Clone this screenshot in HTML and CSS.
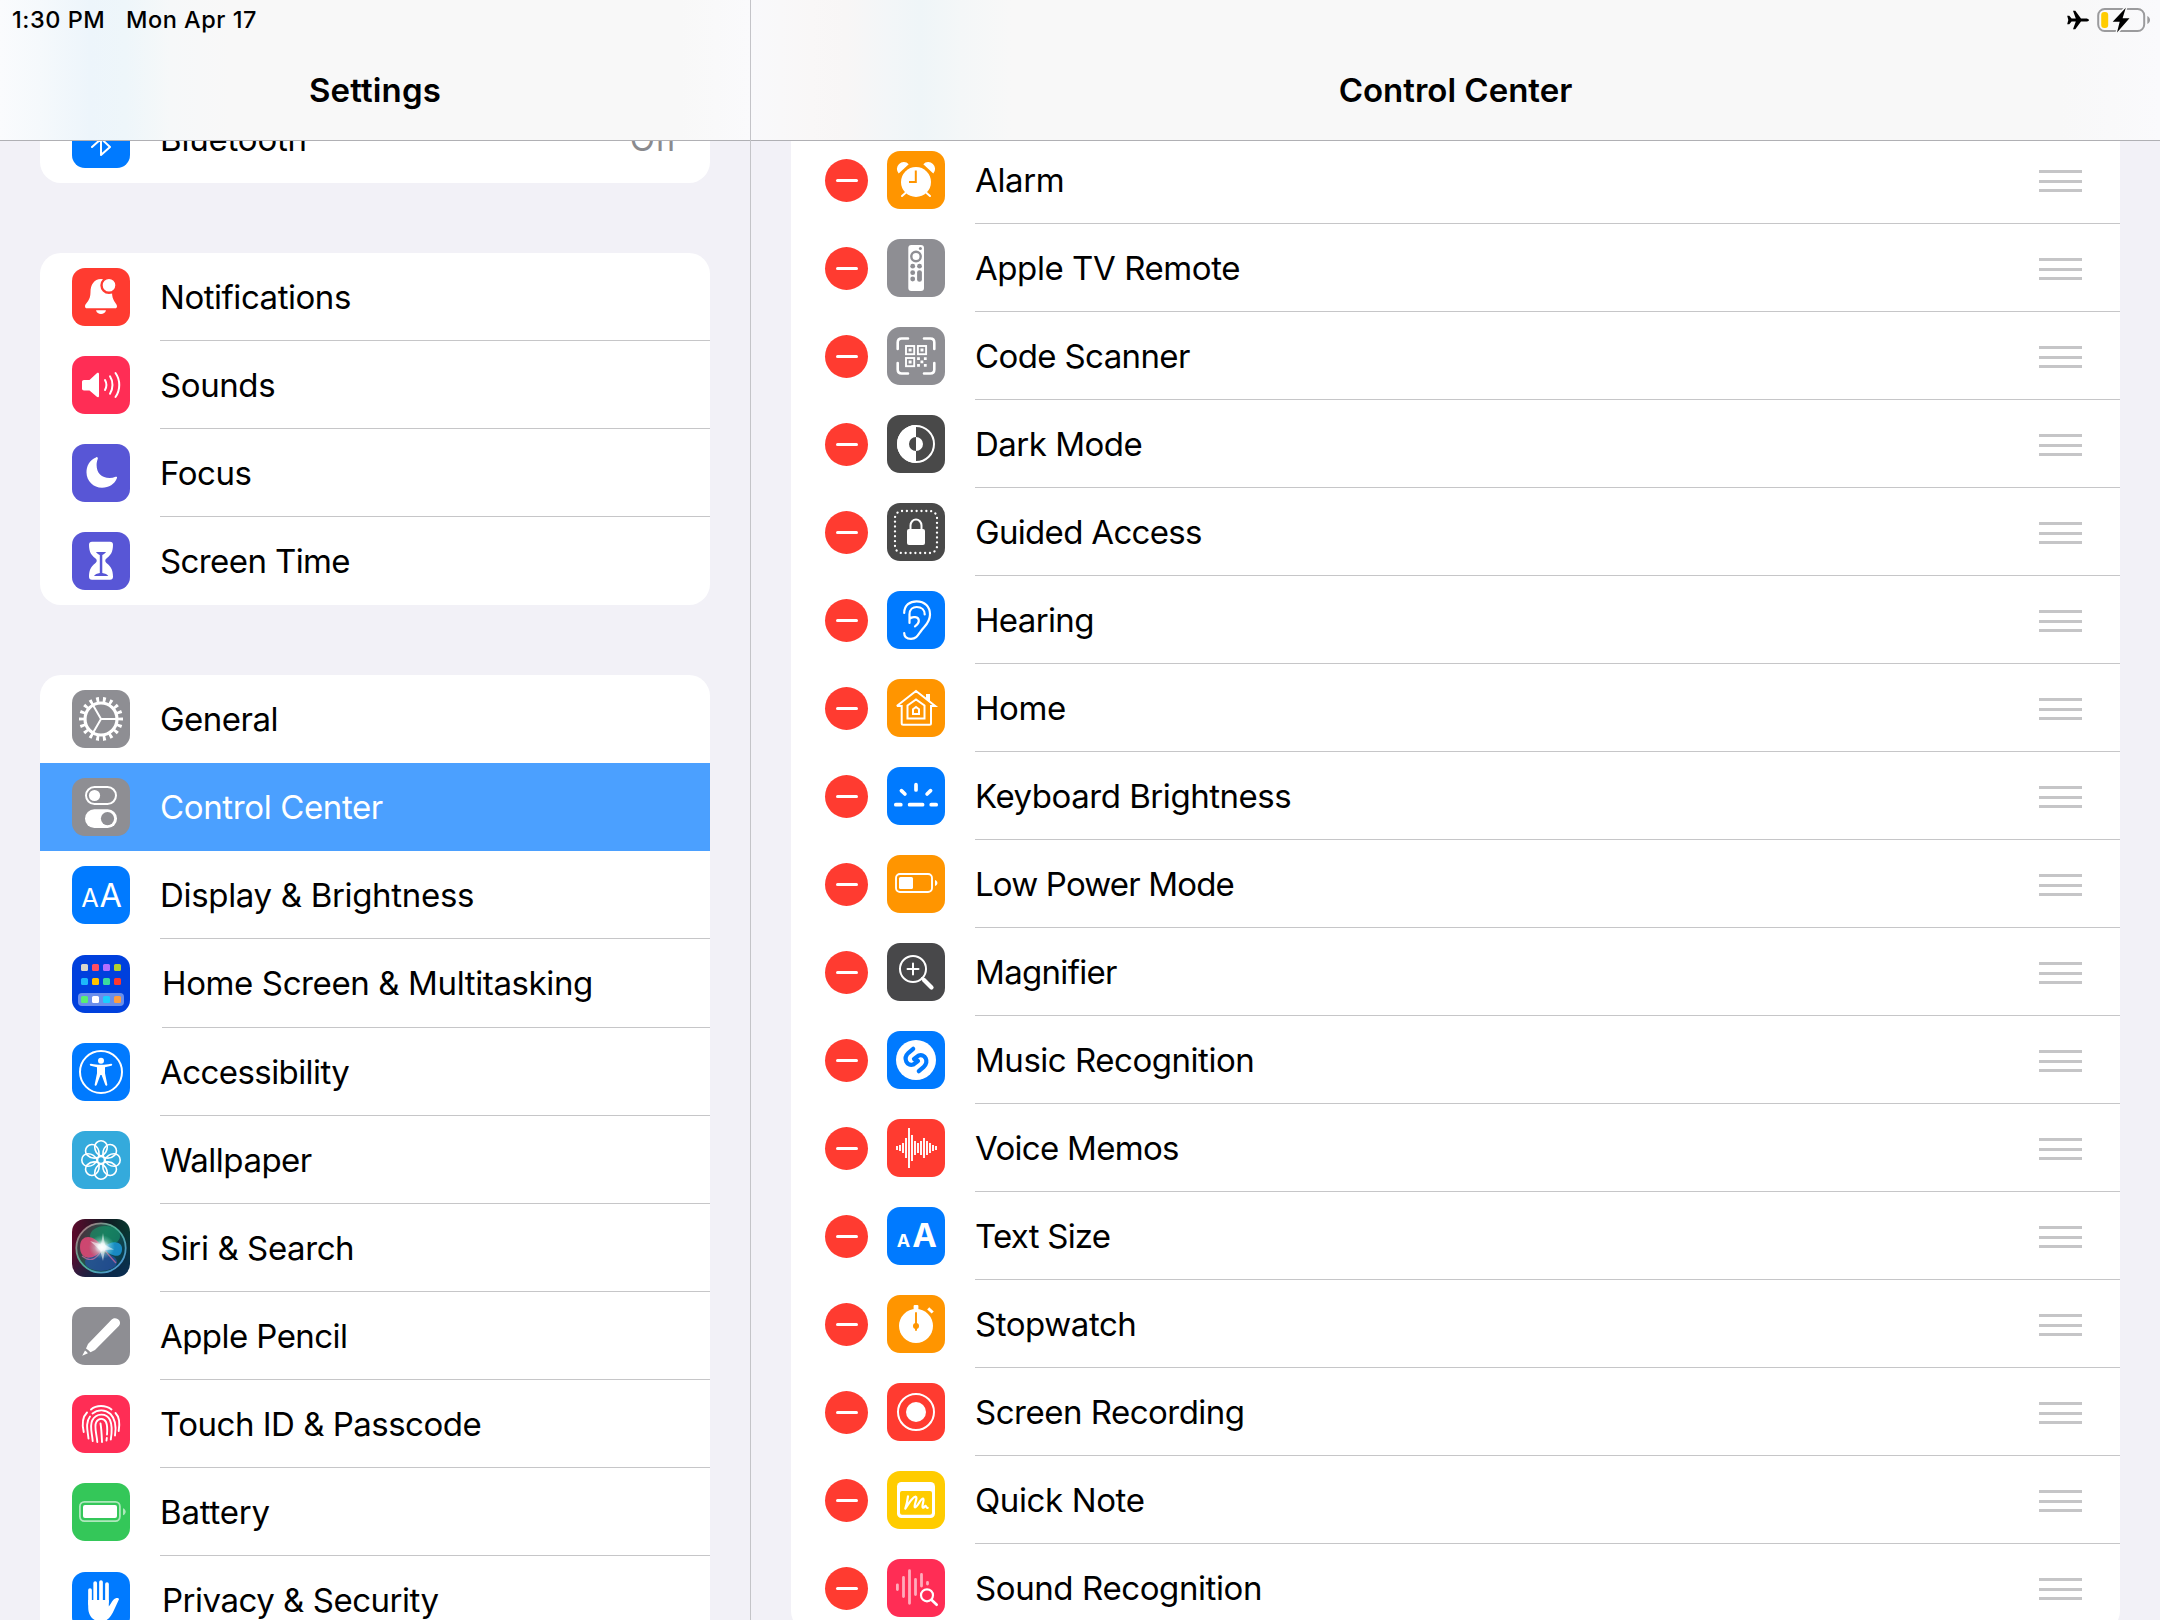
FILE: index.html
```html
<!DOCTYPE html>
<html lang="en">
<head>
<meta charset="utf-8">
<title>Settings</title>
<link rel="stylesheet" href="styles.css">
</head>
<body>
<div class="screen">
  <aside class="pane sidebar">
    <header class="bar bar-side">
      <div class="status"><span class="time">1:30 PM</span><span class="date">Mon Apr 17</span></div>
      <h1 class="title">Settings</h1>
    </header>
    <nav class="scroll side-scroll">
      <ul class="group">
        <li class="row"><span class="icon blue"><svg viewBox="0 0 58 58"><path class="s2" d="M20 20 38 37 29 45V13l9 8-18 16"/></svg></span><span class="label l-bt">Bluetooth</span><span class="value">Off</span></li>
      </ul>
      <ul class="group">
        <li class="row"><span class="icon red"><svg viewBox="0 0 58 58"><path class="f" d="M29 11C22 11 18.5 17 18.5 24 18.5 33 14 34 13 38c0 1.500.5 2.300 2 2.300H43c1.500 0 2-.8 2-2.300C44 34 40 33 40 24 39.500 17 36 11 29 11ZM24 42.300H34c-.6 2.500-2.600 3.700-5 3.700s-4.400-1.200-5-3.700Z"/><circle cx="37" cy="17.300" r="7.500" class="f s-red"/></svg></span><span class="label l-notif">Notifications</span></li>
        <li class="row"><span class="icon pink"><svg viewBox="0 0 58 58"><path class="f" d="M12 24h5.500l7.300-6.700c1-.9 2.200-.5 2.200.8v21.800c0 1.300-1.200 1.700-2.200.8L17.500 34.500H12c-1.300 0-2-.7-2-2v-6.500c0-1.300.7-2 2-2Z"/><path class="s2" d="M33 24c1.700 3 1.700 7 0 10M38 20.300c3.300 5 3.300 12.400 0 17.400M43.500 17c5 7 5 17 0 24"/></svg></span><span class="label l-sounds">Sounds</span></li>
        <li class="row"><span class="icon indigo"><svg viewBox="0 0 58 58"><path class="f" d="M24.500 13.200C17 16 14.500 22.500 14.500 28.500 14.500 37 21.500 43.700 30 43.700c7 0 12.500-3.500 15-9.700.3-1-.4-1.600-1.400-1.200-2 .8-4 1.200-6 1.200-8 0-13-5-13-13 0-2.300.5-4.400 1.200-6.200.4-1-.6-2-1.800-1.600Z"/></svg></span><span class="label l-focus">Focus</span></li>
        <li class="row"><span class="icon indigo"><svg viewBox="0 0 58 58"><path class="f" d="M20 9.700H38c2 0 3 1 3 3 0 7.500-2.500 10.500-6 13.300-1.200 1-1.700 1.700-1.700 2.700s.5 1.700 1.700 2.700c3.500 2.800 6 5.800 6 13.300 0 2-1 3-3 3H20c-2 0-3-1-3-3 0-7.500 2.500-10.500 6-13.300 1.200-1 1.700-1.700 1.700-2.700s-.5-1.700-1.700-2.700c-3.500-2.800-6-5.800-6-13.300 0-2 1-3 3-3Z"/><path class="f-indigo" d="M24 20H34c-.8 1.500-2.500 2.300-3.700 3V41c2.700.5 5.200 1.400 6 3H22c.8-1.600 3.200-2.500 5.800-3V23C26.500 22.300 24.800 21.500 24 20Z"/></svg></span><span class="label l-screen">Screen Time</span></li>
      </ul>
      <ul class="group">
        <li class="row"><span class="icon gray"><svg viewBox="0 0 58 58"><circle class="n" cx="29" cy="29" r="19.300" stroke-width="5.400" pathLength="180" stroke-dasharray="4.200 5.800" stroke-dashoffset="2.100"/><circle class="n" cx="29" cy="29" r="16" stroke-width="3.200"/><path class="s2" d="M29 29H44M29 29 21.500 16M29 29 21.500 42"/></svg></span><span class="label l-general">General</span></li>
        <li class="row selected"><span class="icon gray"><svg viewBox="0 0 58 58"><rect class="s2" x="14" y="9" width="30" height="17" rx="8.500"/><circle class="f" cx="22.500" cy="17.500" r="5.600"/><rect class="f" x="13" y="31.300" width="32" height="18.700" rx="9.300"/><circle class="f-gray" cx="35.500" cy="40.600" r="6.600"/></svg></span><span class="label l-cc">Control Center</span></li>
        <li class="row"><span class="icon blue"><svg viewBox="0 0 58 58"><text class="f glyph" x="9.200" y="41" font-size="25.500">A</text><text class="f glyph" x="27.400" y="41" font-size="32.500">A</text></svg></span><span class="label l-display">Display &amp; Brightness</span></li>
        <li class="row tall"><span class="icon navy"><svg viewBox="0 0 58 58"><rect x="6" y="38" width="46" height="13" rx="4" fill="#6a8fec"/><g><rect x="9" y="9" width="7" height="7" rx="1.500" fill="#d9d6cb"/><rect x="20" y="9" width="7" height="7" rx="1.500" fill="#ff4e63"/><rect x="31" y="9" width="7" height="7" rx="1.500" fill="#b36eff"/><rect x="42" y="9" width="7" height="7" rx="1.500" fill="#b0d12f"/><rect x="9" y="23" width="7" height="7" rx="1.500" fill="#1db8fa"/><rect x="20" y="23" width="7" height="7" rx="1.500" fill="#ffc300"/><rect x="31" y="23" width="7" height="7" rx="1.500" fill="#3bdb9f"/><rect x="42" y="23" width="7" height="7" rx="1.500" fill="#ff382f"/><rect x="9" y="41" width="7" height="7" rx="1.500" fill="#58f070"/><rect x="20" y="41" width="7" height="7" rx="1.500" fill="#fff"/><rect x="31" y="41" width="7" height="7" rx="1.500" fill="#1acfff"/><rect x="42" y="41" width="7" height="7" rx="1.500" fill="#ff9d40"/></g></svg></span><span class="label l-homescreen">Home Screen &amp; Multitasking</span></li>
        <li class="row"><span class="icon blue"><svg viewBox="0 0 58 58"><circle class="s2" cx="29" cy="29" r="21"/><circle class="f" cx="29" cy="17.800" r="3"/><path class="f" d="M19 20.700c3.500.7 6.500 1.100 10 1.100s6.500-.4 10-1.100c1.400-.2 1.700 1.600.4 2L33 24.300v6l2.300 11.200c.2 1.400-1.500 1.800-2 .5L29.600 32h-1.200L24.700 42c-.5 1.300-2.200.9-2-.5L25 30.300v-6l-6.400-1.600c-1.300-.4-1-2.200.4-2Z"/></svg></span><span class="label l-access">Accessibility</span></li>
        <li class="row"><span class="icon sky"><svg viewBox="0 0 58 58"><defs><path id="petal" d="M0-3.800C-3.500-5.500-6.300-8-6.300-13.200A6.300 6 0 0 1 6.300-13.200C6.300-8 3.500-5.500 0-3.800Z"/></defs><g class="n" stroke-width="1.600" transform="translate(29 29)"><use href="#petal"/><use href="#petal" transform="rotate(45)"/><use href="#petal" transform="rotate(90)"/><use href="#petal" transform="rotate(135)"/><use href="#petal" transform="rotate(180)"/><use href="#petal" transform="rotate(225)"/><use href="#petal" transform="rotate(270)"/><use href="#petal" transform="rotate(315)"/><circle r="3.500"/></g></svg></span><span class="label l-wall">Wallpaper</span></li>
        <li class="row"><span class="icon siri"><svg viewBox="0 0 58 58"><defs><radialGradient id="glow"><stop offset="0" stop-color="#fff"/><stop offset=".28" stop-color="#f2fdff" stop-opacity=".9"/><stop offset=".6" stop-color="#c8f0ee" stop-opacity=".35"/><stop offset="1" stop-color="#8fd" stop-opacity="0"/></radialGradient><linearGradient id="ring" x1="0" y1="0" x2="1" y2="1"><stop offset="0" stop-color="#c0687c"/><stop offset=".45" stop-color="#4fb095"/><stop offset="1" stop-color="#4a8fe0"/></linearGradient><linearGradient id="orb" x1="0" y1="0" x2="1" y2=".5"><stop offset="0" stop-color="#5b1f35"/><stop offset=".55" stop-color="#1b5d50"/><stop offset="1" stop-color="#0a3c4c"/></linearGradient></defs><circle cx="29" cy="29" r="24.700" fill="url(#orb)" stroke="url(#ring)" stroke-width="1.800"/><ellipse cx="33" cy="17" rx="15" ry="10" fill="#16a070" opacity=".55"/><ellipse cx="29" cy="43" rx="16" ry="9" fill="#2a50a8" opacity=".7"/><path d="M31 30C24 15 8 14 8 28S22 42 31 30Z" fill="#e84878" opacity=".85"/><path d="M30 29C40 20 51 22 50 31S40 38 30 29Z" fill="#1b9be0" opacity=".8"/><path d="M10 37C20 45 26 38 31 29 36 35 40 40 44 44" fill="none" stroke="#c06aa0" stroke-width="1.200" opacity=".8"/><ellipse cx="30" cy="28" rx="13" ry="12" fill="url(#glow)"/><path d="M18 22 29 25.500 31 14 33 26 42 30.500 33 31 31 42 28 31Z" fill="#fff" opacity=".55"/></svg></span><span class="label l-siri">Siri &amp; Search</span></li>
        <li class="row"><span class="icon gray"><svg viewBox="0 0 58 58"><path class="f" d="M14 41.500 16 37 39.700 12.600C44 8.500 51 14.500 46.800 19L23 43l-4.500 2.200Q16.500 43.200 14 41.500ZM13 43.500q1.800 1 2.900 2.800L10.200 48.800Z"/></svg></span><span class="label l-pencil">Apple Pencil</span></li>
        <li class="row"><span class="icon pink"><svg viewBox="0 0 58 58"><path class="n cap" stroke-width="1.900" d="M19 14.500Q23 11 29 11t10.500 3.500M11.700 37C10 29.500 10.500 22 15 17.500M43.500 18C47 21.500 48 28 46.700 36M16.500 43.500C15.500 35 13.300 27.500 18 21.500M20.500 18.500C26 14 33.500 14.500 38.500 19 43 23.500 44.500 31 43 40.500M20.700 46C20 38 17.500 31 20.200 25.500 24 17.700 34.500 17.700 38 25 40 29.500 40 37 38.800 44.500M25.300 47C24.700 39 21.800 31.500 24.300 27 26.500 22.800 32 22.800 34 27 35.300 30 35.400 35 35 39.500M34.800 43l-.3 2.500M30 47C29.700 40 29.500 34 28.500 28.500"/></svg></span><span class="label l-touch">Touch ID &amp; Passcode</span></li>
        <li class="row"><span class="icon green"><svg viewBox="0 0 58 58"><g opacity=".6"><rect class="n" stroke-width="1.800" x="7.900" y="18.900" width="40" height="19.200" rx="4.500"/><path class="f" d="M51 25.200c3.600 1.200 3.600 5.800 0 7Z"/></g><rect class="f" x="11" y="22" width="34" height="13" rx="2"/></svg></span><span class="label l-battery">Battery</span></li>
        <li class="row tall"><span class="icon blue"><svg viewBox="0 0 58 58"><path class="n cap" stroke-width="3.700" d="M18 18V32M23.200 11V30M29 10V30M35 12V30"/><path class="f" d="M16.200 28H36.800V34.500C39.500 31.500 40.500 27 43.800 26.200c1.600-.4 3.200.2 3.200 1L42.500 37C39 45 35.500 49.500 29 49.500c-8 0-12.800-6-12.800-14Z"/></svg></span><span class="label l-privacy">Privacy &amp; Security</span></li>
      </ul>
    </nav>
  </aside>

  <main class="pane detail">
    <header class="bar bar-main">
      <div class="status status-right">
        <svg class="plane" viewBox="0 0 22 20"><path d="M22 10c0 .9-1.600 1.600-3.500 1.600H14L8.300 19.300H6L8.800 11.600H4.600L2.300 14.300H.2L1.300 10 .2 5.700H2.300L4.600 8.400H8.800L6 .7H8.300L14 8.400h4.500C20.400 8.400 22 9.100 22 10Z"/></svg>
        <svg class="charge" viewBox="0 0 54 26"><rect x="1.200" y="2" width="46" height="22" rx="6.500" fill="none" stroke="#9b9b9d" stroke-width="2"/><path d="M50.300 9c3.600 1.500 3.600 6.500 0 8Z" fill="#9b9b9d"/><rect x="4.200" y="5" width="7" height="16" rx="3" fill="#ffcc00"/><path d="M28.800.7 15.700 14.700h7L20 25.500 32.500 11.300H25.600Z" fill="#000" stroke="#f9f9f9" stroke-width="3" paint-order="stroke"/></svg>
      </div>
      <h1 class="title title-main">Control Center</h1>
    </header>
    <div class="scroll main-scroll">
      <ul class="group controls">
        <li class="row"><i class="minus"></i><span class="icon orange"><svg viewBox="0 0 58 58"><circle class="f" cx="29" cy="31" r="15"/><path class="f" d="M11.700 22.500A6.700 6.700 0 0 1 21.700 13.300ZM46.300 22.500A6.700 6.700 0 0 0 36.300 13.300Z"/><path class="s2" d="M19 41.500 15 45M39 41.500 43 45"/><path class="n s-orange" stroke-width="2" d="M28.800 19.500V31H22"/></svg></span><span class="label r-alarm">Alarm</span><i class="grip"></i></li>
        <li class="row"><i class="minus"></i><span class="icon gray"><svg viewBox="0 0 58 58"><rect class="f" x="21.300" y="6" width="15.700" height="46" rx="3"/><g class="f-gray"><circle cx="33.400" cy="9.500" r="1.500"/><circle cx="25.700" cy="27.200" r="2.400"/><circle cx="32.500" cy="27.200" r="2.400"/><circle cx="25.700" cy="33.700" r="2.400"/><circle cx="25.700" cy="40" r="2.400"/><rect x="30.100" y="31.300" width="4.800" height="11.400" rx="2.300"/></g><circle class="s-gray" cx="29" cy="17.500" r="4.700"/></svg></span><span class="label r-remote">Apple TV Remote</span><i class="grip"></i></li>
        <li class="row"><i class="minus"></i><span class="icon gray"><svg viewBox="0 0 58 58"><path class="n cap" stroke-width="2.600" d="M10.700 22V15.500q0-4 4-4H21M37 11.500h6.300q4 0 4 4V22M47.300 36v6.500q0 4-4 4H37M21 46.500H14.700q-4 0-4-4V36"/><g class="n" stroke-width="1.900"><rect x="19" y="19" width="8.200" height="8.200"/><rect x="30.900" y="19" width="8.200" height="8.200"/><rect x="19" y="31" width="8.200" height="8.200"/></g><path class="f" d="M21.600 21.600h3v3h-3zM33.500 21.600h3v3h-3zM21.600 33.600h3v3h-3zM30.100 30.200h2.800v2.800h-2.800zM36.900 30.200h2.800v2.800h-2.800zM33.500 33.500h2.800v2.800h-2.800zM30.100 37h2.800v2.800h-2.800zM36.900 37h2.800v2.800h-2.800z"/></svg></span><span class="label r-code">Code Scanner</span><i class="grip"></i></li>
        <li class="row"><i class="minus"></i><span class="icon dark"><svg viewBox="0 0 58 58"><circle class="s2" cx="29" cy="29" r="18"/><path class="f" d="M29 10a19 19 0 0 0 0 38V36a7 7 0 0 1 0-14ZM29 22a7 7 0 0 1 0 14Z"/></svg></span><span class="label r-dark">Dark Mode</span><i class="grip"></i></li>
        <li class="row"><i class="minus"></i><span class="icon dark"><svg viewBox="0 0 58 58"><rect class="n cap" stroke-width="2.300" x="8" y="8" width="42" height="42" rx="7" pathLength="320" stroke-dasharray=".1 9.900"/><rect class="f" x="20" y="26" width="18" height="16" rx="2"/><path class="s2" d="M23.500 27V22.500a5.500 6 0 0 1 11 0V27"/></svg></span><span class="label r-guided">Guided Access</span><i class="grip"></i></li>
        <li class="row"><i class="minus"></i><span class="icon blue"><svg viewBox="0 0 58 58"><path class="n cap" stroke-width="2.200" d="M17.200 22C17.200 14 23 10.300 29.500 10.300 38 10.300 43 16 43 23.500 43 32 37.500 35 34 40 30.500 45 29 47.800 24 47.800 20 47.800 17.200 46 17.200 42M22.500 32V23.500C22.500 18.500 26 16 29.700 16 34.500 16 37.700 19 37.700 23.500M22.500 28C25 25 32 25.500 31.800 30 31.700 32.500 30 34 28 35.300"/></svg></span><span class="label r-hearing">Hearing</span><i class="grip"></i></li>
        <li class="row"><i class="minus"></i><span class="icon orange"><svg viewBox="0 0 58 58"><path class="n" stroke-width="2" d="M14.700 26V44.300q0 1.500 1.500 1.500H42.500q1.500 0 1.500-1.500V26M9.800 27 29 12 48.200 27H43M9.800 27H15M20.500 26.500 29 20.500 37.500 26.500V39.500H20.500ZM26 30.300 29 28 32 30.300V35H26Z"/><path class="f" d="M39 15h4v8.500l-4-3Z"/></svg></span><span class="label r-home">Home</span><i class="grip"></i></li>
        <li class="row"><i class="minus"></i><span class="icon blue"><svg viewBox="0 0 58 58"><path class="n cap" stroke-width="3.700" d="M8.800 37.700h5M22.600 37.700H35.600M44.200 37.700h5M29 17.700V23M14.400 23.700l3.500 3.300M43.600 23.700l-3.500 3.300"/></svg></span><span class="label r-keyboard">Keyboard Brightness</span><i class="grip"></i></li>
        <li class="row"><i class="minus"></i><span class="icon orange"><svg viewBox="0 0 58 58"><rect class="n" stroke-width="1.900" x="9" y="19" width="36" height="18" rx="4"/><rect class="f" x="12" y="22" width="14" height="12" rx="1.500"/><path class="f" d="M48 25c3.200 1 3.200 5 0 6Z"/></svg></span><span class="label r-power">Low Power Mode</span><i class="grip"></i></li>
        <li class="row"><i class="minus"></i><span class="icon dark2"><svg viewBox="0 0 58 58"><circle class="s2" cx="26" cy="26" r="13"/><path class="s2" d="M26 20.500V31.500M20.500 26H31.500"/><path class="n cap" stroke-width="4.200" d="M37 37 44.500 44.500"/><path class="s2" d="M35 35l3 3"/></svg></span><span class="label r-magnifier">Magnifier</span><i class="grip"></i></li>
        <li class="row"><i class="minus"></i><span class="icon blue"><svg viewBox="0 0 58 58"><circle class="f" cx="29" cy="29" r="20"/><path class="n cap s-blue" stroke-width="4.200" d="M26.200 17.800 21.500 21.800C15.500 27.500 20 35.500 26.300 33.500L31 30M31.800 40.200 36.500 36.200C42.500 30.500 38 22.500 31.700 24.500L27 28"/></svg></span><span class="label r-music">Music Recognition</span><i class="grip"></i></li>
        <li class="row"><i class="minus"></i><span class="icon red"><svg viewBox="0 0 58 58"><path class="n" stroke-width="1.900" d="M10 27v4M13 26v6M16 24v10M19 19v20M22 9v40M25 16v26M28 22v14M31 24v10M34 22v14M37 19v20M40 22v14M43 24v10M46 26v6M49 27v4"/></svg></span><span class="label r-voice">Voice Memos</span><i class="grip"></i></li>
        <li class="row"><i class="minus"></i><span class="icon blue"><svg viewBox="0 0 58 58"><text class="f glyph bold" x="9.700" y="40" font-size="18">A</text><text class="f glyph bold" x="25.300" y="40" font-size="33">A</text></svg></span><span class="label r-text">Text Size</span><i class="grip"></i></li>
        <li class="row"><i class="minus"></i><span class="icon orange"><svg viewBox="0 0 58 58"><circle class="f" cx="29" cy="31" r="17"/><rect class="f" x="26.600" y="10" width="4.800" height="6" rx="1"/><path class="n" stroke-width="3" d="M41.200 13.300 45.700 17.500"/><circle class="f-orange" cx="29" cy="31" r="3"/><path class="n cap s-orange" stroke-width="1.900" d="M29 18V35"/></svg></span><span class="label r-stop">Stopwatch</span><i class="grip"></i></li>
        <li class="row"><i class="minus"></i><span class="icon red"><svg viewBox="0 0 58 58"><circle class="s2" cx="29" cy="29" r="18"/><circle class="f" cx="29" cy="29" r="10"/></svg></span><span class="label r-rec">Screen Recording</span><i class="grip"></i></li>
        <li class="row"><i class="minus"></i><span class="icon yellow"><svg viewBox="0 0 58 58"><rect class="f" x="10" y="11" width="38" height="36" rx="4.500"/><rect class="f-yellow" x="13" y="20" width="32" height="23.700" rx="2"/><path class="n cap" stroke-width="2.200" d="M21 25.300C20.500 29 19.500 34 18.300 37.700 21.500 32.500 25.500 26 28.500 25.600 31.500 26 26.500 34 27.800 36.300 30 37 33.500 27.500 36 27.500 38 28 34.500 34.500 35.700 36.500 36.800 37.500 37.500 35 38.500 34.800 39.300 35 39 37 40.700 36.900"/></svg></span><span class="label r-note">Quick Note</span><i class="grip"></i></li>
        <li class="row"><i class="minus"></i><span class="icon pink"><svg viewBox="0 0 58 58"><path class="n cap" stroke-width="2.800" opacity=".6" d="M10.400 25.800V30.500M16.500 18.500V37.500M22.500 11.700V44.300M28.500 20.500V35.500M34.500 15.500V27M40.500 23.500V25"/><circle cx="40" cy="36.300" r="6" fill="#ff2d55" stroke="#ff2d55" stroke-width="6"/><circle class="n" stroke-width="2.200" cx="40" cy="36.300" r="6"/><path class="n cap" stroke-width="2.700" d="M44.700 41 49.700 45.700"/></svg></span><span class="label r-sound">Sound Recognition</span><i class="grip"></i></li>
      </ul>
    </div>
  </main>
</div>
</body>
</html>
```
FILE: styles.css
```css
* { box-sizing: border-box; margin: 0; padding: 0; }

html, body { width: 2160px; height: 1620px; overflow: hidden; }

body {
  font-family: Inter, "Liberation Sans", sans-serif;
  color: #000;
  background: #f2f1f7;
}

.screen {
  display: grid;
  grid-template-columns: 751px 1fr;
  width: 2160px;
  height: 1620px;
}

.pane { display: flex; flex-direction: column; min-width: 0; height: 1620px; overflow: hidden; }
.sidebar { border-right: 1px solid #c4c4c8; }

.bar {
  flex: none;
  height: 141px;
  border-bottom: 1px solid #b0b0b4;
  background-color: #f8f8f8;
}
.bar-side {
  background-image: linear-gradient(90deg, #fafbfd 0, #f5f9fc 40px, #edf5fb 90px, #eef6fa 125px, #f6f8f9 170px, #f8f8f8 230px, #f8f8f8 680px, #fafafc 750px);
}
.bar-main {
  background-image: linear-gradient(90deg, #f9f9fb 0, #f9f7f7 60px, #f8f6f6 95px, #f3f6f8 135px, #eff5f8 170px, #f4f7f8 210px, #f8f8f8 260px, #f8f8f8 1310px, #fafafc 1409px);
}

.status {
  display: flex;
  align-items: center;
  height: 40px;
  padding-left: 12px;
  font-size: 23.5px;
  font-weight: 500;
  line-height: 40px;
  letter-spacing: .52px;
}
.status-right { justify-content: flex-end; gap: 8px; padding: 0 9px 0 0; }
.time { width: 114px; }
.plane { width: 22px; height: 20px; }
.charge { width: 54px; height: 26px; }

.title {
  font-size: 33px;
  font-weight: 600;
  line-height: 40px;
  text-align: center;
  padding-top: 30px;
  letter-spacing: .15px;
}
.title-main { letter-spacing: 0; }

.scroll { flex: 1; min-height: 0; overflow: hidden; }
.side-scroll { padding: 0 40px; }
.side-scroll .group:first-child { margin-top: -46px; }
.main-scroll { padding: 0 40px; }

.group { list-style: none; background: #fff; border-radius: 21px; overflow: hidden; }
.side-scroll .group + .group { margin-top: 70px; }
.controls { margin-top: -5px; border-radius: 0 0 21px 21px; }

.row {
  display: flex;
  align-items: center;
  height: 88px;
  padding: 0 36px 0 32px;
  --inset: 120px;
  background: linear-gradient(#c6c6c8, #c6c6c8) no-repeat var(--inset) 100% / 100% 1px;
}
.row:last-child { background: none; }
.row:has(+ .selected) { background: none; }
.row.selected { background: #4ba0ff; color: #fff; }
.tall { height: 89px; padding-top: 1px; --inset: 122px; }
.tall .label { margin-left: 32px; margin-bottom: 2px; }

.controls .row { padding: 0 38px 0 34px; --inset: 184px; }

.icon { flex: none; width: 58px; height: 58px; border-radius: 13px; overflow: hidden; }
.icon svg { display: block; width: 58px; height: 58px; }

.label {
  margin-left: 30px;
  font-size: 33px;
  line-height: 40px;
  white-space: nowrap;
}
.value { margin: 0 -4px 0 auto; color: #8a8a8e; font-size: 33px; line-height: 40px; }

.l-bt { letter-spacing: -.2px; }
.l-notif { letter-spacing: -.46px; }
.l-sounds { letter-spacing: -.4px; }
.l-focus { letter-spacing: -.45px; }
.l-screen { letter-spacing: -.6px; }
.l-general { letter-spacing: -.5px; }
.l-cc { letter-spacing: -.37px; }
.l-display { letter-spacing: -.32px; }
.l-homescreen { letter-spacing: -.38px; }
.l-access { letter-spacing: -.57px; }
.l-wall { letter-spacing: -.5px; }
.l-siri { letter-spacing: -.4px; }
.l-pencil { letter-spacing: -.56px; }
.l-touch { letter-spacing: -.5px; }
.l-battery { letter-spacing: -.2px; }
.l-privacy { letter-spacing: -.48px; }

.r-alarm { letter-spacing: -.35px; }
.r-remote { letter-spacing: -.43px; }
.r-code { letter-spacing: -.62px; }
.r-dark { letter-spacing: -.5px; }
.r-guided { letter-spacing: -.68px; }
.r-hearing { letter-spacing: -.65px; }
.r-home { letter-spacing: -.4px; }
.r-keyboard { letter-spacing: -.46px; }
.r-power { letter-spacing: -.83px; }
.r-magnifier { letter-spacing: -.68px; }
.r-music { letter-spacing: -.47px; }
.r-voice { letter-spacing: -.69px; }
.r-text { letter-spacing: -.75px; }
.r-stop { letter-spacing: -.45px; }
.r-rec { letter-spacing: -.5px; }
.r-note { letter-spacing: -.38px; }
.r-sound { letter-spacing: -.4px; }

.minus {
  flex: none;
  display: flex;
  align-items: center;
  justify-content: center;
  width: 43px;
  height: 43px;
  margin-right: 19px;
  border-radius: 50%;
  background: #ff3b30;
}
.minus::before { content: ""; width: 22px; height: 3px; border-radius: 2px; background: #fff; }

.grip {
  flex: none;
  width: 43px;
  height: 22px;
  margin: 2px 0 0 auto;
  display: flex;
  flex-direction: column;
  justify-content: space-between;
  border-top: 3px solid #c5c5c7;
  border-bottom: 3px solid #c5c5c7;
}
.grip::before { content: ""; height: 3px; margin: auto 0; background: #c5c5c7; }

.blue { background: #007aff; }
.red { background: #ff3b30; }
.pink { background: #ff2d55; }
.indigo { background: #5856d6; }
.gray { background: #8e8e93; }
.navy { background: #0040dd; }
.sky { background: #34aadc; }
.green { background: #34c759; }
.orange { background: #ff9500; }
.yellow { background: #ffcc00; }
.dark { background: #494949; }
.dark2 { background: #48484a; }
.siri { background: linear-gradient(155deg, transparent 40%, #0a2c55 100%), linear-gradient(90deg, #5e0a2c, #101a22 60%, #083a30); }

.f { fill: #fff; }
.f-gray { fill: #8e8e93; }
.f-indigo { fill: #5856d6; }
.f-orange { fill: #ff9500; }
.f-yellow { fill: #ffcc00; }
.n { fill: none; stroke: #fff; }
.s2 { fill: none; stroke: #fff; stroke-width: 2; stroke-linecap: round; stroke-linejoin: round; }
.cap { stroke-linecap: round; stroke-linejoin: round; }
.s-red { stroke: #ff3b30; stroke-width: 2.4; }
.s-orange { stroke: #ff9500; }
.s-blue { stroke: #007aff; }
.s-gray { fill: none; stroke: #8e8e93; stroke-width: 2.4; }
.glyph { font-family: Inter, sans-serif; font-weight: 400; }
.bold { font-weight: 700; }
```
